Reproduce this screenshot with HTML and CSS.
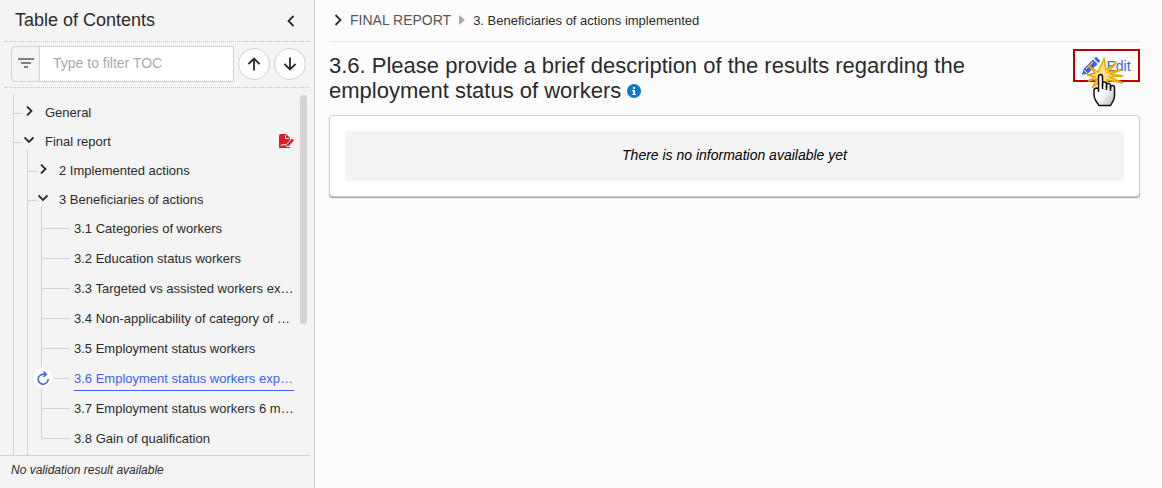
FILE: index.html
```html
<!DOCTYPE html>
<html lang="en">
<head>
    <meta charset="utf-8">
    <title>Final report</title>
    <link rel="stylesheet" href="styles.css">
</head>
<body>
    <aside class="sidebar">
        <header class="toc-header">
            <h2>Table of Contents</h2>
            <button class="icon-button" aria-label="Collapse table of contents">
                <svg width="8" height="12" viewBox="0 0 8 12"><path d="M6.500 1L1.500 6l5 5"/></svg>
            </button>
        </header>

        <div class="toc-filter">
            <div class="filter-group">
                <button class="filter-button" aria-label="Filter options">
                    <svg width="16" height="11" viewBox="0 0 16 11"><path d="M0 1h16M3 5h10M6 9h4"/></svg>
                </button>
                <input type="text" placeholder="Type to filter TOC" aria-label="Filter table of contents">
            </div>
            <button class="round-button" aria-label="Previous">
                <svg width="14" height="14" viewBox="0 0 14 14"><path d="M7 13.500V2M1.500 7L7 1.500 12.500 7"/></svg>
            </button>
            <button class="round-button" aria-label="Next">
                <svg width="14" height="14" viewBox="0 0 14 14"><path d="M7 .5V12M1.500 7L7 12.500 12.500 7"/></svg>
            </button>
        </div>

        <div class="toc-body">
            <ul class="tree">
                <li>
                    <div class="node">
                        <button class="toggle" aria-label="Expand General"><svg width="10" height="10" viewBox="0 0 10 10"><path d="M3 .5L7.500 5 3 9.500"/></svg></button>
                        <a href="#">General</a>
                    </div>
                </li>
                <li>
                    <div class="node">
                        <button class="toggle" aria-label="Collapse Final report"><svg width="10" height="10" viewBox="0 0 10 10"><path d="M.5 2.500L5 7l4.500-4.500"/></svg></button>
                        <a href="#">Final report</a>
                        <svg class="pdf-icon" width="15" height="15" viewBox="0 0 15 15">
                            <path fill="#dc1f26" d="M1.500 0H7l4 4v2L7.500 10v3h3.500v1H1.500Q0 14.500 0 13V1.500Q0 0 1.500 0z"/>
                            <path fill="#dc1f26" d="M8 10.500L13 4.500l2 1.800-5 5.500-2.200.5z"/>
                            <path fill="none" stroke="#fff" d="M6.500 1v3.500H10M2 12l1.500-2 1 1.500L6 10l1 1.500"/>
                        </svg>
                    </div>
                    <ul class="subtree">
                        <li>
                            <div class="node">
                                <button class="toggle" aria-label="Expand 2"><svg width="10" height="10" viewBox="0 0 10 10"><path d="M3 .5L7.500 5 3 9.500"/></svg></button>
                                <a href="#">2 Implemented actions</a>
                            </div>
                        </li>
                        <li>
                            <div class="node">
                                <button class="toggle" aria-label="Collapse 3"><svg width="10" height="10" viewBox="0 0 10 10"><path d="M.5 2.500L5 7l4.500-4.500"/></svg></button>
                                <a href="#">3 Beneficiaries of actions</a>
                            </div>
                            <ul class="leaves">
                                <li><a href="#">3.1 Categories of workers</a></li>
                                <li><a href="#">3.2 Education status workers</a></li>
                                <li><a href="#">3.3 Targeted vs assisted workers expected</a></li>
                                <li><a href="#">3.4 Non-applicability of category of workers</a></li>
                                <li><a href="#">3.5 Employment status workers</a></li>
                                <li class="active">
                                    <span class="refresh"><svg width="14" height="14" viewBox="0 0 14 14"><path d="M10 3.200H7A5 5 0 1 0 12.200 8M7.500 .5L10.200 3.200 7.500 5.900"/></svg></span>
                                    <a href="#">3.6 Employment status workers expected</a>
                                </li>
                                <li><a href="#">3.7 Employment status workers 6 months</a></li>
                                <li><a href="#">3.8 Gain of qualification</a></li>
                            </ul>
                        </li>
                    </ul>
                </li>
            </ul>
            <div class="scrollbar"></div>
        </div>

        <footer class="toc-footer">No validation result available</footer>
    </aside>

    <main class="content">
        <nav class="breadcrumb">
            <svg class="crumb-chevron" width="8" height="12" viewBox="0 0 8 12"><path d="M1.500 1l5 5-5 5"/></svg>
            <a href="#">FINAL REPORT</a>
            <svg class="crumb-arrow" width="6" height="10" viewBox="0 0 6 10"><path d="M0 0l6 5-6 5z"/></svg>
            <span>3. Beneficiaries of actions implemented</span>
        </nav>

        <div class="question">
            <h1>3.6. Please provide a brief description of the results regarding the employment status of workers
                <svg class="info-icon" width="14" height="14" viewBox="0 0 14 14">
                    <circle cx="7" cy="7" r="7"/>
                    <path d="M6 3h2v2H6zM5 6h3v4h1v1H5v-1h1V7H5z"/>
                </svg>
            </h1>
            <div class="edit">
                <button class="edit-button">
                    <svg class="pencil" width="18" height="18" viewBox="0 0 18 18">
                        <path class="pencil-body" d="M0 18l1.500-6L11 2.500l4.500 4.500L6 16.500zM12 1.500L13 .5q1-1 2 0L17.500 3q1 1 0 2l-1 1z"/>
                        <path class="pencil-line" d="M4 12L11 5M2 13l3 3"/>
                    </svg>
                    Edit
                </button>
                <svg class="pointer" width="48" height="52" viewBox="0 0 48 52">
                    <defs>
                        <linearGradient id="handFill" x1="0" y1="0" x2="1" y2="1">
                            <stop offset="0.5" stop-color="#fff"/>
                            <stop offset="1" stop-color="#b8b8b8"/>
                        </linearGradient>
                    </defs>
                    <path fill="#ffe27a" stroke="#e6a800" stroke-width="1.500" d="M17 15L7 8l7 8-8 2 8 2-7 4 9-2-5 9 9-8 7 5-1-5 16 3-14-6 14-1-13-2 11-4-13 2 9-10-11 8-2-11z"/>
                    <path fill="url(#handFill)" stroke="#111" stroke-width="1.500" d="M17.500 35V20q0-2.500 2-2.500t2 2.500v9-2q0-2 2-2t2 2v4-2.500q0-2 2-2t2 2V32v-1.500q0-2 2-2t2 2.500v8q0 3-2 6l-2 3.500H18L15 44q-2-3-2-6v-4q0-3 2.500-3l2 1"/>
                    <path fill="none" stroke="#111" stroke-width="1.500" d="M21.500 27v5M25.500 28v5M29.500 29v5"/>
                </svg>
            </div>
        </div>

        <section class="card">
            <p>There is no information available yet</p>
        </section>
    </main>
</body>
</html>
```
FILE: styles.css
```css
* {
    box-sizing: border-box;
}

body {
    margin: 0;
    min-height: 100vh;
    display: flex;
    font-family: "Liberation Sans", Arial, sans-serif;
    font-size: 13px;
    color: #2b2b2b;
    background: #fcfcfc;
}

h1, h2, p, ul {
    margin: 0;
    padding: 0;
    font-weight: normal;
}

ul {
    list-style: none;
}

a {
    color: inherit;
    text-decoration: none;
}

button {
    display: flex;
    align-items: center;
    justify-content: center;
    padding: 0;
    border: none;
    background: none;
    font: inherit;
    color: inherit;
    cursor: pointer;
}

.sidebar svg path:not([fill]),
.crumb-chevron path {
    fill: none;
    stroke: #2b2b2b;
    stroke-width: 1.8;
}

.sidebar {
    flex: 0 0 315px;
    min-width: 0;
    display: flex;
    flex-direction: column;
    padding-right: 4px;
    background: #f4f4f4;
    border-right: 1px solid #ccc;
}

.toc-header {
    display: flex;
    align-items: center;
    justify-content: space-between;
    height: 42px;
    margin-left: 4px;
    padding: 0 15px 0 11px;
    border-bottom: 1px dotted #c4c4c4;
}

.toc-header h2 {
    font-size: 18px;
}

.toc-filter {
    display: flex;
    align-items: center;
    gap: 4px;
    height: 46px;
    margin-left: 4px;
    padding: 0 4px 2px 7px;
    border-bottom: 1px dotted #c4c4c4;
}

.filter-group {
    flex: 1;
    display: flex;
    min-width: 0;
    height: 36px;
    border: 1px solid #d2d2d2;
    border-radius: 4px 0 0 4px;
}

.filter-button {
    width: 28px;
    border-right: 1px solid #d2d2d2;
}

.sidebar .filter-button svg path {
    stroke: #808080;
}

.filter-group input {
    flex: 1;
    min-width: 0;
    padding: 0 13px 2px;
    border: none;
    background: #fff;
    font: inherit;
    font-size: 14px;
}

.filter-group input::placeholder {
    color: #aaa;
}

.round-button {
    width: 32px;
    height: 32px;
    border: 1px solid #d2d2d2;
    border-radius: 50%;
    background: #fff;
}

.toc-body {
    flex: 1;
    display: flex;
    padding: 7px 3px 0 13px;
}

/* vertical guides are the list borders, the ticks come from .node */
.tree {
    flex: 1;
    min-width: 0;
    padding: 3px 0 0;
    border-left: 1px solid #d2d2d2;
}

.subtree {
    margin: -6px 0 0 13px;
    padding: 6px 0 1px;
    border-left: 1px solid #d2d2d2;
}

.node {
    display: flex;
    align-items: center;
    height: 29px;
    padding-right: 6px;
    background: linear-gradient(#d2d2d2, #d2d2d2) 0 15px / 9px 1px no-repeat;
}

.toggle {
    width: 10px;
    height: 10px;
    margin: 0 11px 4px 10px;
}

.pdf-icon {
    margin-left: auto;
}

.leaves {
    margin: -8px 0 0 13px;
    padding-top: 8px;
    background: linear-gradient(#d2d2d2, #d2d2d2) 0 0 / 1px calc(100% - 16px) no-repeat;
}

.leaves li {
    position: relative;
    display: flex;
    align-items: center;
    height: 30px;
    padding: 0 6px 0 33px;
    background: linear-gradient(#d2d2d2, #d2d2d2) 0 14px / 29px 1px no-repeat;
}

.leaves a {
    flex: 1;
    min-width: 0;
    line-height: 22px;
    overflow: hidden;
    white-space: nowrap;
    text-overflow: ellipsis;
}

.leaves .active a {
    color: #3d63e8;
    border-bottom: 1px solid #3d63e8;
}

.refresh {
    position: absolute;
    left: -9px;
    top: 3px;
    width: 22px;
    height: 22px;
    display: flex;
    align-items: center;
    justify-content: center;
    border: 1px solid #eee;
    border-radius: 50%;
    background: #fff;
}

.sidebar .refresh svg path {
    stroke: #3d63e8;
    stroke-width: 1.5;
}

.scrollbar {
    width: 7px;
    height: 229px;
    border-radius: 4px;
    background: #d4d4d4;
}

.toc-footer {
    height: 33px;
    padding-left: 11px;
    border-top: 1px solid #d2d2d2;
    font-size: 12px;
    font-style: italic;
    line-height: 28px;
}

.content {
    flex: 1;
    min-width: 0;
    padding: 0 22px 0 14px;
    border-right: 1px solid #ccc;
}

.breadcrumb {
    display: flex;
    align-items: center;
    gap: 8px;
    height: 42px;
    padding: 0 0 1px 5px;
    border-bottom: 1px solid #e6e6e6;
}

.breadcrumb a {
    font-size: 14px;
    color: #555;
}

.crumb-arrow {
    fill: #aaa;
}

.question {
    display: flex;
    justify-content: space-between;
    gap: 20px;
    padding-top: 7px;
}

.question h1 {
    padding-top: 4px;
    font-size: 22px;
    line-height: 25px;
}

.info-icon {
    fill: #0b78d6;
}

.info-icon path {
    fill: #fff;
}

.edit {
    position: relative;
}

.edit-button {
    gap: 6px;
    width: 67px;
    height: 33px;
    border: 2px solid #c00000;
    background: #fff;
    font-size: 14px;
    color: #3d63e8;
}

.pencil-body {
    fill: #3d63e8;
}

.pencil-line {
    fill: none;
    stroke: #fff;
}

.pointer {
    position: absolute;
    left: 8px;
    top: 8px;
    pointer-events: none;
}

.card {
    margin-top: 12px;
    padding: 15px;
    border: 1px solid #d2d2d2;
    border-radius: 4px;
    background: #fff;
    box-shadow: 0 1px 1px #999;
}

.card p {
    padding: 14px 15px 16px;
    background: #f4f4f4;
    font-size: 14px;
    font-style: italic;
    line-height: 20px;
    text-align: center;
    color: #000;
}
```
